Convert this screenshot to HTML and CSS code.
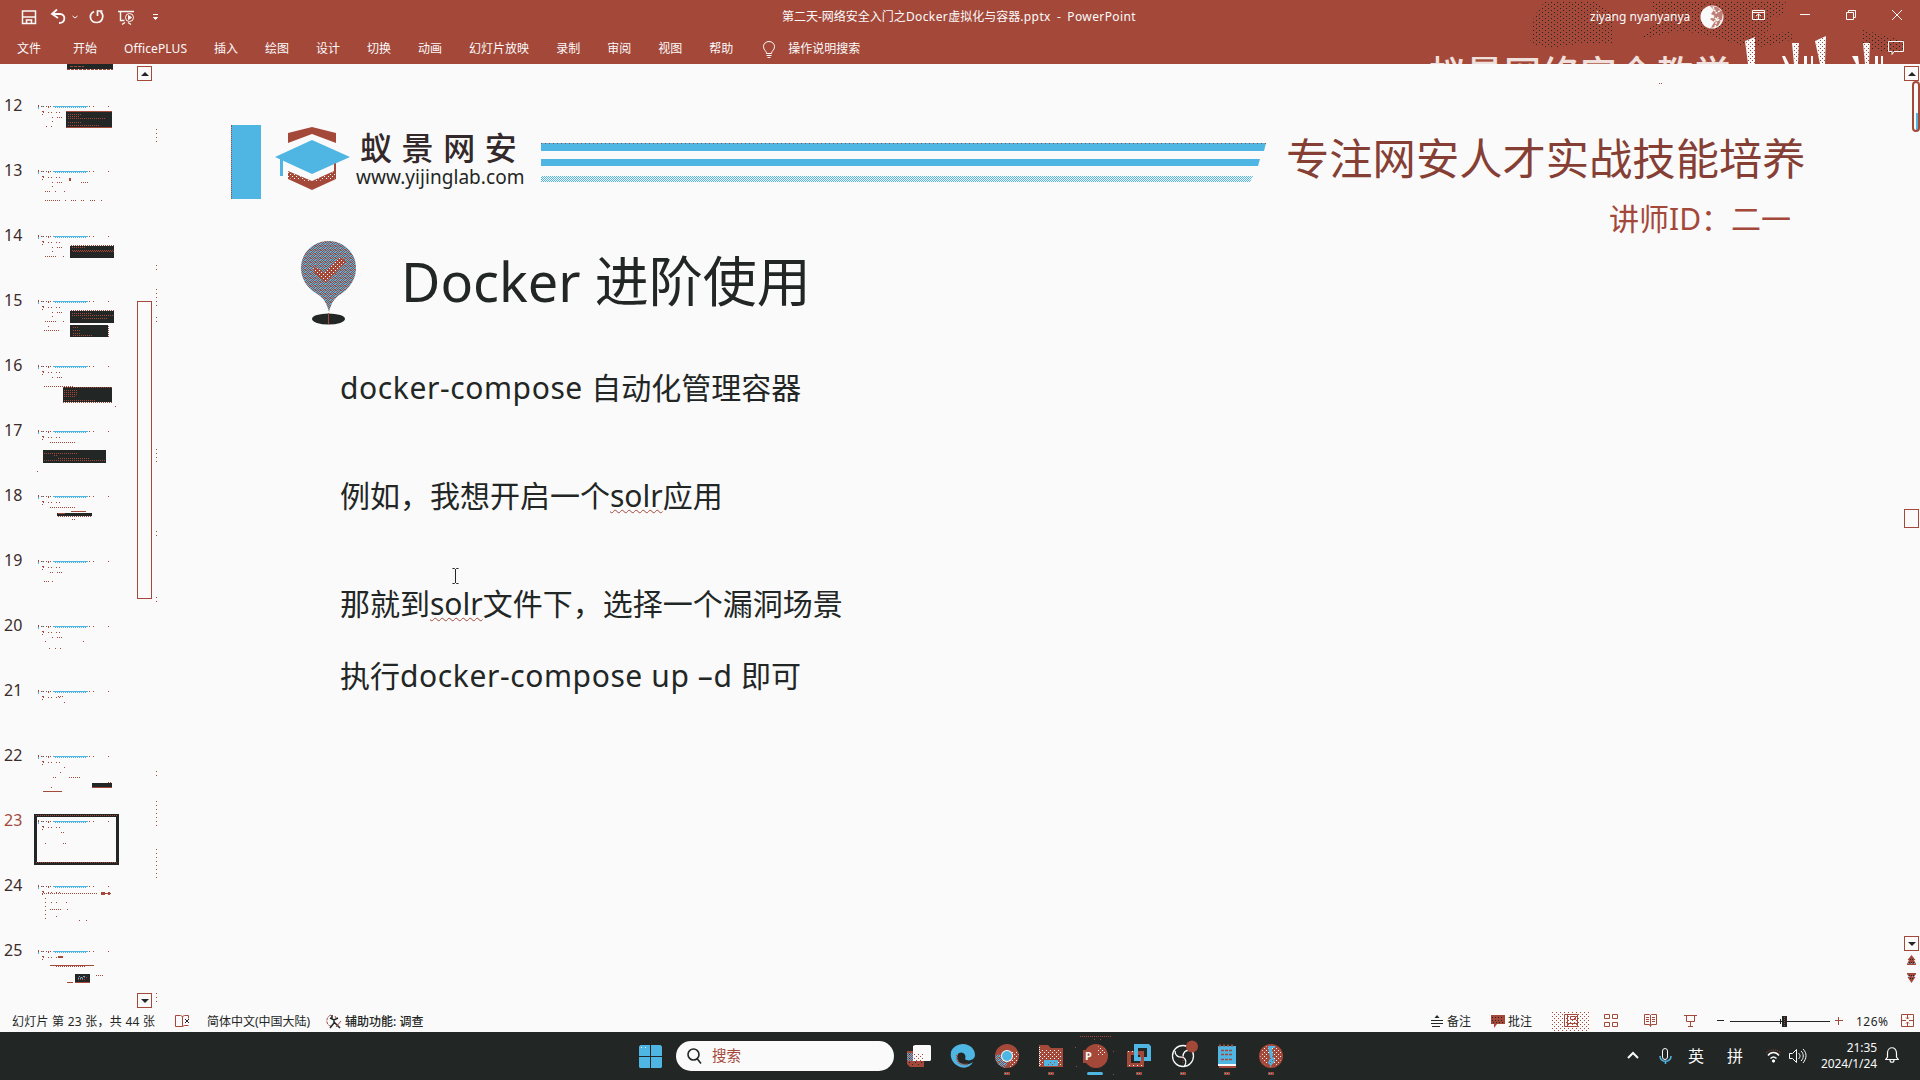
FILE: index.html
```html
<!DOCTYPE html>
<html lang="zh-CN">
<head>
<meta charset="utf-8">
<title>第二天-网络安全入门之Docker虚拟化与容器.pptx - PowerPoint</title>
<link rel="stylesheet" href="styles.css">
</head>
<body>
<svg class="defs" width="0" height="0" aria-hidden="true">
  <defs>
    <pattern id="dotDark" width="6" height="4" patternUnits="userSpaceOnUse"><path d="M0 0h1v1H0zM3 2h1v1H3z" fill="#222625"/></pattern>
    <pattern id="dotRed" width="4" height="4" patternUnits="userSpaceOnUse"><path d="M0 0h1v1H0zM2 2h1v1H2z" fill="#a4493a"/></pattern>
    <pattern id="dotWhite" width="4" height="4" patternUnits="userSpaceOnUse"><path d="M0 0h1v1H0zM2 2h1v1H2z" fill="#fafafa"/></pattern>
    <pattern id="mixBlue" width="4" height="2" patternUnits="userSpaceOnUse"><path d="M0 0h1v1H0zM2 0h1v1H2zM1 1h1v1H1zM3 1h1v1H3z" fill="#4fb5e2"/></pattern>
    <pattern id="mixPin" width="5" height="4" patternUnits="userSpaceOnUse"><path d="M0 0h5v4H0z" fill="#4fb5e2"/><path d="M0 0h1v1H0zM2 0h1v1H2zM1 1h1v1H1zM3 1h2v1H3zM0 2h1v1H0zM2 2h1v1H2zM4 2h1v1H4zM1 3h1v1H1zM3 3h1v1H3z" fill="#a4493a"/></pattern>
    <g id="th">
      <path d="M23 8h35v1H23z" fill="#4fb5e2"/><path d="M25 9.5h32" stroke="#4fb5e2" stroke-dasharray="1 1"/>
      <path d="M8 9h1v2H8zM12 8h1v1h-1z" fill="#4fb5e2"/>
      <path d="M8 7h1v2H8zM11 8h1v1h-1zM13 8h1v1h-1zM16 8h1v1h-1zM18 8h1v2h-1zM20 8h1v1h-1zM59 8h1v1h-1zM63 8h1v1h-1zM78 8h1v1h-1zM12 13h2v1h-2zM12 16h1v1h-1zM13 14h1v1h-1zM18 14h1v1h-1zM21 14h1v1h-1zM26 14h1v1h-1zM29 14h1v1h-1z" fill="#a4493a"/>
    </g>
  </defs>
</svg>
<div class="app">
  <header class="ribbon">
    <svg class="ribbon-art" width="420" height="64" viewBox="1500 0 420 64" aria-hidden="true">
      <path d="M1545 1h52l17 14-1 28-36 1-24 4-23-4 4-28z M1650 1h136l-2 12-14 6 2 8-12 10 30-6 4 8-30 8-24-2-26-8-34-7-38 9 13-18-2-12z M1863 30l20 5 22 6v10l-15 2-27-6z" fill="url(#dotDark)"/>
      <g fill="#fafafa"><path d="M1745 41l10-4v27h-7z"/><path d="M1792 43h7l-1 21h-4z"/><path d="M1815 41l11-5-1 28h-5z"/><path d="M1863 43h7l-1 21h-4z"/><path d="M1782 56h3l4 8h-4zM1804 56h3v8h-3zM1811 56h2v8h-2zM1852 56l4 8h3l-1-8zM1875 56h3v8h-3zM1881 56h2v8h-2z"/></g>
      <path d="M1746 41l9-3v26h-7zM1793 44h6v20h-4zM1816 41l9-4v27h-5zM1864 44h5v20h-4z" fill="url(#dotRed)"/>
    </svg>
    <div class="banner">蚁景网络安全教学</div>
    <div class="titlebar">
      <svg class="quick" width="170" height="28" viewBox="0 0 170 28" fill="none" stroke="#fafafa">
        <path d="M22.500 11h13v12.500h-13zM23 17h12M26.500 23v-3h5v3" stroke-width="1.500"/>
        <path d="M57 9.500l-5 4.500 6 4M52 14h8c6 0 6 9-1 9" stroke-width="1.800"/>
        <path d="M72.500 16l2.500 2 2.500-2"/>
        <path d="M94 11.500c-6 3-4 11 2.500 11s8-8 4-10.500M97.500 16v-5h5" stroke-width="1.700"/>
        <path d="M118 11.500h16M120.500 12v8.500h4M122 24.500l3-2M131 24.500l-3-2" stroke-width="1.400"/><circle cx="129.500" cy="17.500" r="4"/><path d="M128.500 15.500l3 2-3 2z" fill="#fafafa"/>
        <path d="M153 14.500h5M153.500 17.500h4l-2 2z" fill="#fafafa"/>
      </svg>
      <div class="doc-title">第二天-网络安全入门之<span>Docker</span>虚拟化与容器<span>.pptx</span>&nbsp; -&nbsp; <span>PowerPoint</span></div>
      <div class="account"><span>ziyang nyanyanya</span>
        <svg width="24" height="24" viewBox="0 0 24 24"><circle cx="12" cy="12" r="11.500" fill="#fafafa"/><path d="M10 1l4 4-3 4 4 2-5 3 4 3-3 6 7-2 4-7 1-7-6-5z" fill="#a4493a" opacity=".7"/><path d="M13 2l3 6 5-3M12 12l9 4M12 19l5-5M15 22l3-10" stroke="#fafafa" stroke-width="1.500" stroke-dasharray="2 1" fill="none"/></svg>
      </div>
      <svg class="window-buttons" width="160" height="28" viewBox="1745 0 160 28" fill="none" stroke="#fafafa">
        <path d="M1752.500 10.500h12v9h-12zM1753 12.500h11M1758.500 19v-5M1756 16l2.500-2 2.500 2M1800 14.500h10M1846.500 12.500h7v7h-7zM1848.500 12v-1.500h7v7H1854M1892 10l10 10M1902 10l-10 10"/>
      </svg>
    </div>
    <nav class="tabs">
      <span class="file">文件</span><span>开始</span><span class="plus">OfficePLUS</span><span>插入</span><span>绘图</span><span>设计</span><span>切换</span><span>动画</span><span>幻灯片放映</span><span>录制</span><span>审阅</span><span>视图</span><span>帮助</span>
      <svg class="bulb" width="12" height="18" viewBox="0 0 12 18" fill="none" stroke="#fafafa"><path d="M3.500 12.500c0-3-3-3-3-7a5.500 5 0 0 1 11 0c0 4-3 4-3 7zM3.500 14.500h5M4.500 16.500h3"/></svg>
      <span class="tell">操作说明搜索</span>
      <svg class="comment" width="16" height="15" viewBox="0 0 16 15" fill="none" stroke="#fafafa"><path d="M.5.500h15v10H6l-2 3v-3H.5z"/></svg>
    </nav>
  </header>

  <main class="workspace">
    <aside class="thumbs">
      <ol class="slides">
        <li class="cut"><b></b><svg width="100" height="34" viewBox="0 31 100 34"><path d="M37 20h46v16H37z" fill="#222625"/><path d="M37 36.500h46M40 33.500h14" stroke="#a4493a" stroke-dasharray="3 1"/></svg></li>
        <li><b>12</b><svg width="100" height="65"><use href="#th"/><path d="M36 13h46v17H36z" fill="#222625"/><path d="M36 13h46v1H36zM36 29h46v1H36z" fill="#a4493a"/><path d="M38 16.500h14M38 18.500h12M38 20.500h38M38 24.500h14M38 27.500h32M27 19.500h5M22 19.500h1M22 23.500h1M16 28.500h2M21 28.500h1" class="dots"/></svg></li>
        <li><b>13</b><svg width="100" height="65"><use href="#th"/><path d="M39 15h2v3h-2z" fill="#a4493a"/><path d="M22 19.500h1M27 19.500h5M51 19.500h7M22 23.500h1M15 28.500h5M25 28.500h1M34 28.500h1M15 37.500h15M35 37.500h1M41 37.500h5M51 37.500h4M60 37.500h5M71 37.500h1" class="dots"/></svg></li>
        <li><b>14</b><svg width="100" height="65"><use href="#th"/><path d="M40 18h44v12H40z" fill="#222625"/><path d="M41 17.500h43M42 19.500h14M42 22.500h42M43 23.500h41M22 19.500h1M27 19.500h5M22 23.500h1M15 28.500h11M33 28.500h1" class="dots"/></svg></li>
        <li><b>15</b><svg width="100" height="65"><use href="#th"/><path d="M40 18h44v12H40zM40 32h38v12H40z" fill="#222625"/><path d="M41 17.500h43M42 20.500h20M42 22.500h42M52 25.500h26M22 19.500h1M27 19.500h5M22 23.500h1M15 28.500h11M33 28.500h1M18 33.500h2M14 37.500h16M43 34.500h5M43 37.500h8M43 40.500h8M43 42.500h20M78.500 33v11" class="dots"/></svg></li>
        <li><b>16</b><svg width="100" height="65"><use href="#th"/><path d="M33 29h49v15H33z" fill="#222625"/><path d="M33 29.500h49M34 32.500h14M34 34.500h14M34 36.500h13M34 38.500h12M34 42.500h32M33 44.500h49M22 19.500h1M27 19.500h5M14 28.500h29M85 48.500h1" class="dots"/></svg></li>
        <li><b>17</b><svg width="100" height="65"><use href="#th"/><path d="M13 27h63v13H13z" fill="#222625"/><path d="M14 30.500h34M24 32.500h4M14 37.500h61M28 35.500h32M20 19.500h25M7 48.500h1" class="dots"/></svg></li>
        <li><b>18</b><svg width="100" height="65"><use href="#th"/><path d="M27 25h35v3H27z" fill="#222625"/><path d="M41 23h15v1H41zM28 25h7v1h-7z" fill="#a4493a"/><path d="M28 28.500h34M20 19.500h25M42 31.500h3" class="dots"/></svg></li>
        <li><b>19</b><svg width="100" height="65"><use href="#th"/><path d="M20 19.500h3M27 19.500h5M14 28.500h6M22 28.500h1" class="dots"/></svg></li>
        <li><b>20</b><svg width="100" height="65"><use href="#th"/><path d="M22 19.500h1M27 19.500h5M15 23.500h1M53 23.500h1M19 30.500h1M25 30.500h1M30 30.500h1" class="dots"/></svg></li>
        <li><b>21</b><svg width="100" height="65"><use href="#th"/><path d="M34 19.500h1M28 13.500h5" class="dots"/></svg></li>
        <li><b>22</b><svg width="100" height="65"><use href="#th"/><path d="M62 35h20v4H62z" fill="#222625"/><path d="M62 39h20v1H62zM13 43h19v1H13z" fill="#a4493a"/><path d="M34 19.500h1M30 24.500h1M23 29.500h3M39 29.500h11M21 39.500h1M78 34.500h3" class="dots"/></svg></li>
        <li class="current"><b>23</b><svg width="100" height="65"><use href="#th"/><path d="M5.500 2.500h82v48h-82z" fill="none" stroke="#222625" stroke-width="3"/><path d="M6 2.500h82M6 49.500h82M31 19.500h4M15 30.500h1M33 30.500h4" class="dots"/></svg></li>
        <li><b>24</b><svg width="100" height="65"><use href="#th"/><path d="M71 14h4v3h-4zM75 15h6v1h-6zM78 13.500h2v3h-2z" fill="#a4493a"/><path d="M15.500 20v23" fill="none" stroke="#a4493a" stroke-dasharray="1 3"/><path d="M12 15.500h55M21 24.500h1M26 24.500h1M36 24.500h1M20 31.500h12M37 31.500h1M26 38.500h1M49 42.500h1M56 42.500h1" class="dots"/></svg></li>
        <li><b>25</b><svg width="100" height="65"><use href="#th"/><path d="M45 31h15v9H45z" fill="#222625"/><path d="M20 22h44v1H20zM37 39h6v1h-6zM45 39h15v1H45zM28 13h5v2h-5z" fill="#a4493a"/><path d="M48 36l8-3M49 33l6 4" stroke="#4fb5e2" stroke-dasharray="1 1"/><path d="M48 34.500h10M48 36.500h8M26 23.500h30M66 32.500h7" class="dots"/></svg></li>
      </ol>
      <div class="scroll left-scroll">
        <i class="btn up"></i><i class="thumb"></i><i class="btn down"></i>
      </div>
      <svg class="splitter" width="2" height="950" viewBox="0 64 2 950"><path d="M.5 129v13M.5 265v5M.5 289v18M.5 317v6M.5 449v13M.5 531v8M.5 597v6M.5 771v8M.5 801v28M.5 849v30M.5 993v10" stroke="#a4493a" stroke-dasharray="1 3"/></svg>
    </aside>

    <section class="canvas">
      <div class="slide-head">
        <i class="bar"></i>
        <svg class="logo" width="76" height="74" viewBox="275 125 76 74">
          <path d="M288 133l24-6 24 6v10l-24-9-24 9z" fill="#a4493a"/>
          <path d="M275 157l37-17 38 17-38 17z" fill="#4fb5e2"/>
          <path d="M280 159h3v17h-3z" fill="#4fb5e2"/>
          <path d="M288 171l24 10 22-10v-7l2-1v16l-24 11-24-11z" fill="#a4493a"/><path d="M288 171l24 10 24-10v7l-24 4-24-4z" fill="url(#dotWhite)"/>
        </svg>
        <div class="brand"><strong>蚁景网安</strong><span>www.yijinglab.com</span></div>
        <svg class="stripes" width="726" height="74" viewBox="541 125 726 74">
          <path d="M541 143h725l-2 8H541zM541 159h719l-2 7H541z" fill="#4fb5e2"/><path d="M541 143.500h725" stroke="#a4493a" stroke-dasharray="1 3"/><path d="M541 176h712l-3 6H541z" fill="url(#mixBlue)"/>
        </svg>
        <div class="slogan"><p>专注网安人才实战技能培养</p><p class="teacher">讲师ID：二一</p></div>
      </div>
      <div class="slide-title">
        <svg width="56" height="86" viewBox="0 0 56 86"><ellipse cx="27.500" cy="79" rx="16.500" ry="5.500" fill="#222625"/><path d="M27.500 1C42 1 55 12 55 28c0 13-8 21-15 26-7 4-10 10-12 18-2-8-5-14-12-18C8 49 0 41 0 28 0 12 13 1 27.500 1z" fill="url(#mixPin)"/><path d="M12 27l4 1 7 5 15-15 6 1v4L25 42l-3-1-9-9z" fill="#a4493a"/><path d="M12 27l4 1 7 5 15-15 6 1v4L25 42l-3-1-9-9z" fill="url(#dotWhite)"/><path d="M27.500 73v11" stroke="#a4493a"/></svg>
        <h1><span>Docker</span> 进阶使用</h1>
      </div>
      <div class="body-text">
        <p><span class="la">docker-compose </span>自动化管理容器</p>
        <p>例如，我想开启一个<u>solr</u>应用</p>
        <p>那就到<u>solr</u>文件下，选择一个漏洞场景</p>
        <p class="cmd">执行<span class="la">docker-compose up –d </span>即可</p>
      </div>
      <svg class="cursor" width="8" height="17" viewBox="0 0 8 17"><path d="M.5.500h2l1 1 1-1h2M.5 15.500h2l1-1 1 1h2M3.500 1v14" fill="none" stroke="#222625"/></svg>
      <i class="speck"></i>
    </section>
    <div class="scroll right-scroll">
      <i class="btn up"></i><i class="pill"></i><i class="thumb"></i><i class="btn down"></i>
      <svg width="11" height="30" viewBox="0 0 11 30" fill="#a4493a"><path d="M5.500 1l4 5H8l2 4v1H1v-1l2-4H1.500zM1 19h9v1l-2 3h1.500l-4 6-4-6H3l-2-3z"/><path d="M3 8.500h5M4 5.500h3M3 21.500h5M4 24.500h3" stroke="#222625" stroke-dasharray="1 1"/><path d="M2 9.500h7M3 22.500h6" stroke="#4fb5e2" stroke-dasharray="1 2"/></svg>
    </div>
  </main>

  <footer class="status">
    <span class="s1">幻灯片 第 23 张，共 44 张</span>
    <svg class="s2" width="15" height="14" viewBox="0 0 15 14" fill="none" stroke="#a4493a"><path d="M7.500 2.500v10H.5V1.500h5l2 1 2-1h4v3M7.500 12.500l2-1h4"/><path d="M10 5l4 4M14 5l-4 4" stroke="#222625"/></svg>
    <span class="s3">简体中文(中国大陆)</span>
    <svg class="s4" width="16" height="15" viewBox="0 0 16 15" fill="none"><path d="M5 1C-1 3 0 12 5 12" stroke="#a4493a" stroke-dasharray="3 1"/><path d="M6 1v4M4 4l4 2 4-2M8 6v3l-4 5M8 8l6 6" stroke="#222625" stroke-width="1.500"/><path d="M15 7l-5 6M9 2l1 2" stroke="#a4493a"/></svg>
    <span class="s5">辅助功能: 调查</span>
    <svg class="s6" width="12" height="14" viewBox="0 0 12 14"><path d="M6 1l2.500 3h-5z" fill="#222625"/><path d="M0 6.500h12M0 9.500h12M1 12.500h8" stroke="#222625"/></svg>
    <span class="s7">备注</span>
    <svg class="s8" width="14" height="14" viewBox="0 0 14 14"><path d="M0 1h14v9H6l-3 4v-4H0z" fill="#a4493a"/><path d="M1 3.500h12M1 6.500h12M2 8.500h10" stroke="#222625" stroke-dasharray="1 2"/></svg>
    <span class="s9">批注</span>
    <svg class="views" width="372" height="20" viewBox="1548 1011 372 20" fill="none" stroke="#a4493a">
      <path d="M1552 1011h38v20h-38z" fill="url(#dotRed)" stroke="none"/><path d="M1564.500 1014.500h13v12h-13zM1567.500 1015v11M1568 1023.500h9M1570.500 1016.500h5v3h-5z"/>
      <path d="M1604.500 1014.500h5v4h-5zM1612.500 1014.500h5v4h-5zM1604.500 1022.500h5v4h-5zM1612.500 1022.500h5v4h-5z"/>
      <path d="M1644.500 1014.500h5l1 1 1-1h5v10h-5l-1 2-1-2h-5zM1650.500 1015v11M1646 1017.500h3M1646 1019.500h3M1646 1021.500h3M1652 1017.500h3M1652 1019.500h3M1652 1021.500h3"/>
      <path d="M1684 1015.500h13M1686.500 1016v5.500h8V1016M1690.500 1022v4M1688 1026.500h5"/>
      <path d="M1717 1020.500h7" stroke="#222625"/><path d="M1730 1021.500h100M1780.500 1019v5" stroke="#222625"/><path d="M1782 1016h5v11h-5z" fill="#222625" stroke="none"/><path d="M1784.500 1017v9" stroke-dasharray="1 1"/><path d="M1835 1020.500h8M1838.500 1017v8"/>
      <text x="1856" y="1026" textLength="32">126%</text>
      <path d="M1901.500 1014.500h12v12h-12zM1907.500 1015v4M1907.500 1022v4M1902 1020.500h4M1909 1020.500h4M1906 1017.500l1.500 1.500 1.500-1.500M1906 1023.500l1.500-1.500 1.500 1.500"/>
    </svg>
  </footer>

  <div class="taskbar">
    <svg class="start" width="23" height="24" viewBox="0 0 23 24"><path d="M0 1.500L1.500 0H11v11H0zM12 0h9.500L23 1.500V11H12zM0 12h11v11H1L0 22zM12 12h11v10l-1 1H12z" fill="#4fb5e2"/><path d="M1 1h8v2H1z" fill="url(#dotWhite)"/></svg>
    <div class="search"><svg width="16" height="17" viewBox="0 0 16 17" fill="none" stroke="#222625" stroke-width="1.600"><circle cx="6.500" cy="6.500" r="5.500"/><path d="M10 10.500l4 5"/></svg><span>搜索</span></div>
    <svg class="apps" width="400" height="44" viewBox="900 1034 400 44">
      <path d="M907 1051h17v16h-14l-3-3z" fill="#a4493a"/><path d="M909 1053h14v13h-14z" fill="url(#dotDark)"/><path d="M907 1053h6v8h-6z" fill="url(#mixBlue)"/><path d="M915 1045h15l1 1v14l-1 1h-17v-15z" fill="#fafafa"/><path d="M914 1053h10v8h-10z" fill="url(#dotRed)"/>
      <path d="M963 1044c7 0 12 5 12 11 0 5-7 7-10 4 2-4-2-8-6-6-3 2-3 10 4 11 4 1 7 0 10-2-3 6-10 7-15 4-6-3-8-9-7-14 1-4 6-8 12-8z" fill="#4fb5e2"/><path d="M957 1055c-1 7 4 11 11 9" stroke="#a4493a" stroke-width="2" stroke-dasharray="1 1" fill="none"/>
      <circle cx="1007" cy="1056" r="12" fill="#a4493a"/><path d="M995 1056a12 12 0 0 0 10 12l3-6-9-8z" fill="url(#mixPin)"/><path d="M1010 1067a12 12 0 0 0 8-15h-6z" fill="url(#dotWhite)"/><circle cx="1007" cy="1056" r="6" fill="#fafafa"/><circle cx="1007" cy="1056" r="5" fill="#4fb5e2"/>
      <path d="M1039 1045h9l3 3h12v19h-24z" fill="#a4493a"/><path d="M1040 1050h22v16h-22z" fill="url(#dotWhite)"/><path d="M1044 1060h14v6h-14z" fill="#4fb5e2"/><path d="M1047 1062h8v4h-8z" fill="url(#dotRed)"/><path d="M1039.500 1047v19" stroke="#fafafa" stroke-dasharray="1 1"/>
      <path d="M1080 1036.500h31M1075 1047.500h1M1113 1051.500h1M1076 1066.500h1M1094 1039.500h1M1100 1039.500h1M1113 1074.500h1" stroke="#a4493a" stroke-dasharray="1 1"/><circle cx="1096" cy="1056" r="12" fill="#a4493a"/><path d="M1083 1050h12v13h-12z" fill="#a4493a"/><path d="M1097 1046l8 3v7h-8z" fill="url(#dotWhite)"/><text class="ppt" x="1085" y="1060">P</text>
      <path d="M1136 1046h12l1 1v12h-13z" fill="none" stroke="#4fb5e2" stroke-width="4"/><path d="M1129 1053h13v12h-13z" fill="none" stroke="#a4493a" stroke-width="4"/><path d="M1136 1049v10h5" fill="none" stroke="#4fb5e2" stroke-width="4"/><path d="M1128 1051.500h6M1129 1065.500h15" stroke="#fafafa" stroke-dasharray="1 3"/>
      <circle cx="1183" cy="1056" r="10.500" fill="none" stroke="#fafafa" stroke-width="1.300"/><path d="M1183 1057c-5 1-8-2-8-6M1183 1057c0-5 3-7 7-7M1183 1057c4 3 3 7 1 10" fill="none" stroke="#fafafa" stroke-width="1.300"/><path d="M1183 1056v8" stroke="#a4493a" stroke-dasharray="1 1"/><circle cx="1192" cy="1046.500" r="6" fill="#a4493a"/>
      <path d="M1218 1046h18v18h-18z" fill="#4fb5e2"/><path d="M1218 1064h18v2h-18z" fill="#fafafa"/><path d="M1219 1066h17v2h-17z" fill="#a4493a"/><path d="M1219 1045.500h16" stroke="#a4493a" stroke-width="2" stroke-dasharray="2 2"/><path d="M1221 1050.500h12M1221 1054.500h12M1221 1059.500h12" stroke="#a4493a" stroke-width="1.500" stroke-dasharray="3 1"/>
      <circle cx="1271" cy="1056" r="12" fill="#a4493a"/><circle cx="1271" cy="1056" r="10.500" fill="url(#dotWhite)"/><path d="M1268 1046h7v2h-3l1 8 2 5-4 5-3-3 2-5z" fill="#4fb5e2"/><path d="M1268 1056h6v10h-6z" fill="url(#dotRed)"/>
      <path d="M1004 1072h6v3h-6zM1048 1072h6v3h-6zM1136 1072h6v3h-6zM1180 1072h6v3h-6zM1224 1072h6v3h-6zM1268 1072h6v3h-6z" fill="#a4493a"/><path d="M1005 1073.500h4M1049 1073.500h4M1137 1073.500h4M1181 1073.500h4M1225 1073.500h4M1269 1073.500h4" stroke="#4fb5e2" stroke-dasharray="1 1"/><rect x="1087" y="1072" width="16" height="3" rx="1.500" fill="#4fb5e2"/>
    </svg>
    <svg class="tray1" width="46" height="20" viewBox="1626 1046 46 20" fill="none" stroke="#fafafa"><path d="M1628 1058l5-5 5 5" stroke-width="2"/><rect x="1662.500" y="1048.500" width="5" height="11" rx="2.500"/><path d="M1660 1056c0 7 11 7 11 0M1665.500 1061v3" stroke="#4fb5e2" stroke-width="1.600"/></svg>
    <span class="ime a">英</span><span class="ime b">拼</span>
    <svg class="tray2" width="42" height="20" viewBox="1765 1046 42 20" fill="none" stroke="#fafafa"><path d="M1766 1053c4-4 11-4 15 0" stroke="#a4493a" stroke-dasharray="1 1"/><path d="M1768 1055.500c3-4 8-4 11 0M1770.500 1058.500c2-2 4-2 6 0" stroke-width="1.500"/><circle cx="1773.500" cy="1061" r="1.200" fill="#fafafa"/><path d="M1789.500 1053.500h3l4-4v13l-4-4h-3zM1798.500 1053c2 2 2 4 0 6M1801 1051c3 3 3 7 0 10M1803 1049c4 4 4 9 0 14"/></svg>
    <div class="clock"><span>21:35</span><span>2024/1/24</span></div>
    <svg class="bell" width="14" height="17" viewBox="0 0 14 17" fill="none" stroke="#fafafa" stroke-width="1.200"><path d="M.7 12.500h12.600L11.500 10V6c0-7-9-7-9 0v4zM5 13c0 3 4 3 4 0"/></svg>
  </div>
</div>
</body>
</html>
```
FILE: styles.css
```css
* { box-sizing: border-box; }
body { margin: 0; background: #fafafa; color: #222625; font: 12px/16px "Noto Sans", "Noto Sans CJK SC", sans-serif; }
p, h1, ol { margin: 0; padding: 0; font-weight: normal; }
svg { flex: none; display: block; }
.defs { position: absolute; }
.app { width: 1920px; height: 1080px; display: grid; grid-template-rows: 64px 949px 19px 48px; overflow: hidden; }

.ribbon { position: relative; background: #a4493a; color: #fafafa; overflow: hidden; }
.ribbon-art { position: absolute; right: 0; top: 0; }
.banner { position: absolute; left: 1428px; top: 52px; font: 500 37px/40px "Noto Sans CJK SC", sans-serif; letter-spacing: 1px; white-space: nowrap; color: #f0e0dd; }
.titlebar { position: relative; display: flex; height: 32px; align-items: flex-start; }
.doc-title { margin-left: 612px; width: 400px; padding-top: 9px; white-space: nowrap; }
.doc-title span { letter-spacing: .4px; }
.account { margin-left: 408px; display: flex; gap: 10px; width: 134px; padding-top: 5px; white-space: nowrap; }
.account span { width: 100px; padding-top: 4px; font-size: 12px; }
.window-buttons { margin-left: 21px; }
.tabs { position: relative; display: flex; height: 32px; padding: 9px 16px 0 17px; gap: 27px; white-space: nowrap; }
.file { margin-right: 5px; }
.plus { width: 63px; letter-spacing: .1px; }
.bulb { margin-left: 3px; }
.tell { margin-left: -14px; }
.comment { margin-left: auto; }

.workspace { display: grid; grid-template-columns: 160px 1fr 16px; min-height: 0; }
.thumbs { display: flex; overflow: hidden; }
.slides { list-style: none; width: 137px; flex: none; }
.slides svg { shape-rendering: crispEdges; }
.slides li { display: flex; height: 65px; }
.slides .cut { height: 34px; }
.slides b { width: 30px; padding-left: 4px; font: 16px/15px "Noto Sans", sans-serif; color: #3c2b29; }
.slides .current b { color: #a4493a; }
.dots { fill: none; stroke: #a4493a; stroke-dasharray: 1 1; }
.scroll { display: flex; flex-direction: column; width: 15px; flex: none; padding-top: 2px; }
.scroll i { flex: none; display: block; }
.btn { height: 15px; border: 1px solid #a4493a; display: flex !important; align-items: center; justify-content: center; }
.btn::after { content: ""; border: 4px solid transparent; border-width: 0 4px 4px; border-bottom-color: #222625; }
.btn.down::after { border-width: 4px 4px 0; border-color: #222625 transparent; }
.thumb { border: 1px solid #a4493a; }
.left-scroll .thumb { margin-top: 220px; height: 298px; }
.left-scroll .down { margin-top: 394px; }
.splitter { margin-left: 4px; shape-rendering: crispEdges; }

.canvas { position: relative; display: flex; flex-direction: column; }
.slide-head { display: flex; height: 74px; margin: 61px 0 0 71px; }
.bar { width: 30px; background: #4fb5e2; border-left: 1px dotted #a4493a; }
.logo { margin-left: 14px; }
.brand { width: 185px; padding-left: 5px; display: flex; flex-direction: column; white-space: nowrap; }
.brand strong { font: 500 32px/42px "Noto Sans CJK SC", sans-serif; letter-spacing: 9.600px; padding-left: 4px; color: #33292a; }
.brand span { font-size: 19px; line-height: 20px; letter-spacing: .05px; }
.stripes { margin-left: 5px; }
.slogan { margin-left: 19px; width: 540px; font: 43.300px/62px "Noto Sans CJK SC", sans-serif; color: #853f34; white-space: nowrap; }
.teacher { color: #a4493a; font: 30px/50px "Noto Sans", "Noto Sans CJK SC", sans-serif; margin: 7px 0 0 323px; }
.slide-title { display: flex; margin: 41px 0 0 141px; height: 86px; }
.slide-title h1 { margin-left: 44px; font: 54px/82px "Noto Sans", "Noto Sans CJK SC", sans-serif; white-space: nowrap; }
.body-text { margin: 35px 0 0 180px; font-size: 30px; line-height: 54px; }
.body-text p { height: 108px; white-space: nowrap; }
.body-text .cmd { margin-top: -36px; }
.la { letter-spacing: .6px; }
.body-text u { text-decoration: underline wavy #a4493a 1px; text-underline-offset: 2px; text-decoration-skip-ink: none; }
.cursor { position: absolute; left: 292px; top: 504px; }
.speck { position: absolute; left: 1499px; top: 19px; width: 3px; height: 1px; border: solid #a4493a; border-width: 0 1px; }
.right-scroll .pill { width: 8px; height: 51px; margin: 0 -1px 0 8px; border: 2px solid #a4493a; border-radius: 4px; background: linear-gradient(transparent 30px, #4fb5e2 30px) 2px 0 no-repeat; }
.right-scroll .thumb { margin-top: 377px; height: 19px; }
.right-scroll .down { margin-top: 408px; }
.right-scroll svg { margin: 3px 0 0 2px; }

.status { display: flex; height: 19px; padding-left: 12px; white-space: nowrap; line-height: 17px; }
.status svg { margin-top: 1px; }
.status .views { margin: -2px 0 0 16px; }
.s1 { width: 163px; letter-spacing: .25px; }
.s3 { margin-left: 17px; width: 119px; }
.s5 { margin-left: 3px; width: 1086px; font-weight: 500; }
.s7 { margin-left: 4px; width: 44px; }
.s9 { margin-left: 3px; width: 24px; }
.views text { font-size: 12px; fill: #222625; stroke: none; }

.taskbar { display: flex; background: #222625; color: #fafafa; }
.start { margin: 13px 0 0 639px; }
.search { width: 218px; height: 30px; margin: 9px 0 0 14px; border-radius: 15px; background: #fafafa; color: #a4493a; display: flex; padding: 7px 0 0 11px; font-size: 14.500px; line-height: 15px; gap: 9px; }
.apps { margin: 2px 0 0 6px; }
.ppt { font: bold 11px "Noto Sans", sans-serif; fill: #fafafa; }
.tray1 { margin: 14px 0 0 326px; }
.ime { font-size: 16px; line-height: 48px; width: 16px; }
.ime.a { margin-left: 16px; }
.ime.b { margin-left: 23px; }
.tray2 { margin: 14px 0 0 22px; }
.clock { width: 70px; padding-top: 8px; display: flex; flex-direction: column; align-items: flex-end; letter-spacing: -.1px; }
.bell { margin: 15px 0 0 8px; }
```
